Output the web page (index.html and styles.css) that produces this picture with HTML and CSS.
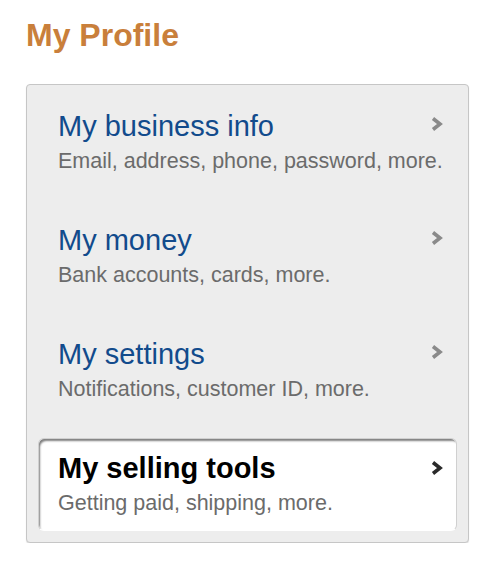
FILE: index.html
```html
<!DOCTYPE html>
<html lang="en">

<head>
    <meta charset="UTF-8">
    <meta name="viewport" content="width=device-width, initial-scale=1.0">
    <title>My Profile</title>
    <link rel="stylesheet" href="styles.css">
</head>

<body>
    <h1 class="page-title">My Profile</h1>

    <div class="menu">
        <a class="menu-item" href="#">
            <div class="item-head">
                <span class="item-title">My business info</span>
                <svg class="chevron" width="12" height="14" viewBox="0 0 12 14"><polyline points="2,1.5 9,7 2,12.5" /></svg>
            </div>
            <div class="item-sub">Email, address, phone, password, more.</div>
        </a>
        <a class="menu-item" href="#">
            <div class="item-head">
                <span class="item-title">My money</span>
                <svg class="chevron" width="12" height="14" viewBox="0 0 12 14"><polyline points="2,1.5 9,7 2,12.5" /></svg>
            </div>
            <div class="item-sub">Bank accounts, cards, more.</div>
        </a>
        <a class="menu-item" href="#">
            <div class="item-head">
                <span class="item-title">My settings</span>
                <svg class="chevron" width="12" height="14" viewBox="0 0 12 14"><polyline points="2,1.5 9,7 2,12.5" /></svg>
            </div>
            <div class="item-sub">Notifications, customer ID, more.</div>
        </a>
        <a class="menu-item active" href="#">
            <div class="item-head">
                <span class="item-title">My selling tools</span>
                <svg class="chevron" width="12" height="14" viewBox="0 0 12 14"><polyline points="2,1.5 9,7 2,12.5" /></svg>
            </div>
            <div class="item-sub">Getting paid, shipping, more.</div>
        </a>
    </div>
</body>

</html>
```

FILE: styles.css
```css
body {
    font-family: 'Liberation Sans', Arial, Helvetica, sans-serif;
    margin: 0;
    padding: 0;
    background: #fff;
}

.page-title {
    margin: 17px 0 0 26px;
    font-size: 32px;
    line-height: 36px;
    font-weight: bold;
    color: #c97f3b;
}

.menu {
    width: 443px;
    box-sizing: border-box;
    margin: 31px 0 0 26px;
    padding: 11px;
    background-color: #ededed;
    border: 1px solid #c6c6c6;
    border-radius: 4px;
    box-shadow: 0 1px 1px rgba(0, 0, 0, 0.12);
    display: flex;
    flex-direction: column;
    gap: 21px;
}

.menu-item {
    display: block;
    height: 93px;
    box-sizing: border-box;
    padding: 13px 13px 0 19px;
    text-decoration: none;
    border: 1px solid transparent;
    border-radius: 6px;
}

.item-head {
    display: flex;
    justify-content: space-between;
    align-items: center;
}

.item-title {
    font-size: 29px;
    line-height: 32px;
    color: #124b8c;
}

.chevron {
    margin-top: -4px;
}

.item-sub {
    margin-top: 7px;
    font-size: 21.5px;
    line-height: 24px;
    color: #6b6b6b;
}

.chevron polyline {
    fill: none;
    stroke: #8a8a8a;
    stroke-width: 3.6;
}

.menu-item.active {
    background-color: #fff;
    border-color: #d0d0d0;
    border-bottom-color: transparent;
    box-shadow: inset 2px 3px 2px -1px rgba(0, 0, 0, 0.5);
}

.menu-item.active .item-title {
    font-weight: bold;
    color: #000;
}

.menu-item.active .chevron {
    margin-top: 0;
}

.menu-item.active .chevron polyline {
    stroke: #2a2a2a;
}
```
